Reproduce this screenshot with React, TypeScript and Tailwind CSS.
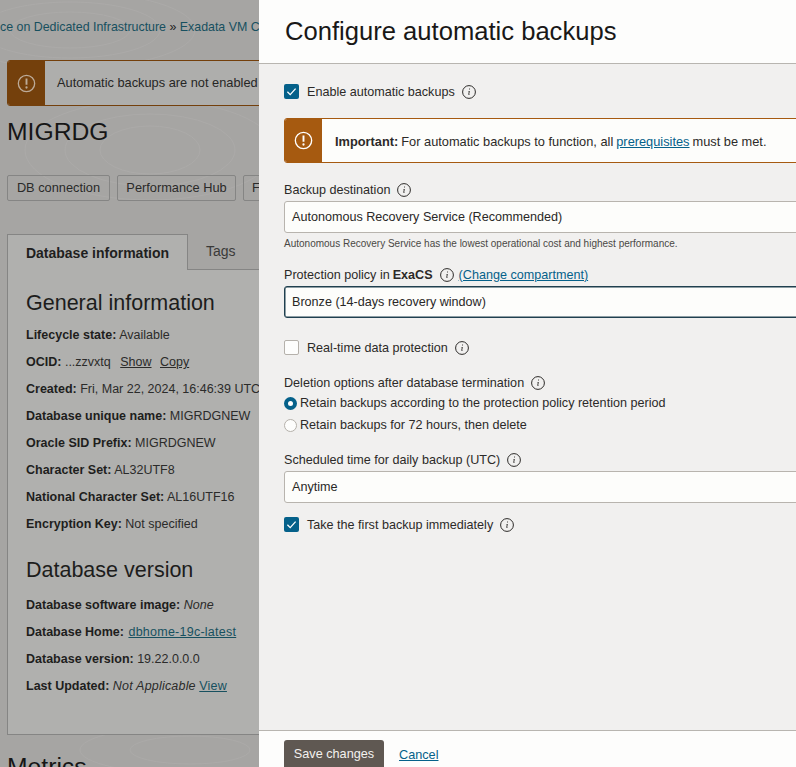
const InfoIcon = ({ className = '' }: { className?: string }) => (
  <svg viewBox="0 0 14 14" className={`h-[14px] w-[14px] shrink-0 ${className}`} fill="none">
    <circle cx="7" cy="7" r="6.4" stroke="#2c2a28" strokeWidth="1" />
    <path d="M7.2 3.6h.9l-.2 1h-.9zM6.9 5.9h.9l-.6 3.4c0 .2.1.3.5.2l-.1.5c-.8.2-1.4 0-1.3-.7l.5-2.9h-.5l.1-.5z" fill="#2c2a28" />
  </svg>
);

const WarnIcon = ({ stroke }: { stroke: string }) => (
  <svg viewBox="0 0 20 20" className="h-[19px] w-[19px]" fill="none">
    <circle cx="10" cy="10" r="8.6" stroke={stroke} strokeWidth="1.4" />
    <path d="M10 4.8v6.6" stroke={stroke} strokeWidth="2" />
    <circle cx="10" cy="14.2" r="1.2" fill={stroke} />
  </svg>
);

const CheckBox = ({ checked }: { checked: boolean }) =>
  checked ? (
    <span className="flex h-[15px] w-[15px] shrink-0 items-center justify-center rounded-[2px] bg-[#05618a]">
      <svg viewBox="0 0 15 15" className="h-[15px] w-[15px]" fill="none">
        <path d="M3.4 7.8l2.8 2.8 5.4-6" stroke="#ffffff" strokeWidth="1.3" />
      </svg>
    </span>
  ) : (
    <span className="h-[15px] w-[15px] shrink-0 rounded-[2px] border border-[#b5b1ab] bg-[#fdfdfc]" />
  );

const Field = ({ value, focused = false }: { value: string; focused?: boolean }) => (
  <div
    className={[
      'flex items-center rounded-l-[3px] border bg-[#fdfdfb] pl-[7px] text-[12.6px] text-[#2a2826] -mr-[10px]',
      focused ? 'h-[32px] border-[#20404f] shadow-[inset_0_0_0_0.5px_#20404f]' : 'h-[32px] border-[#b8b4ae]',
    ].join(' ')}
  >
    {value}
  </div>
);

const DetailRow = ({ label, children }: { label: string; children?: React.ReactNode }) => (
  <div className="h-[27px] whitespace-nowrap text-[12.5px] leading-[27px] text-[#2b2b2a]">
    <b className="font-bold text-[#1e1e1d]">{label}</b> {children}
  </div>
);

const BackgroundPage = () => (
  <div className="relative h-full w-[259px] shrink-0 overflow-hidden bg-[#a6a5a3]">
    <svg className="absolute inset-0 h-full w-full" viewBox="0 0 259 767" fill="none" stroke="#adacaa" strokeWidth="0.7">
      <ellipse cx="70" cy="30" rx="60" ry="18" />
      <ellipse cx="70" cy="30" rx="90" ry="28" />
      <ellipse cx="70" cy="30" rx="125" ry="38" />
      <ellipse cx="150" cy="150" rx="50" ry="24" />
      <ellipse cx="150" cy="150" rx="85" ry="36" />
      <ellipse cx="150" cy="150" rx="125" ry="50" />
      <ellipse cx="190" cy="750" rx="60" ry="14" />
      <ellipse cx="190" cy="750" rx="110" ry="24" />
    </svg>
    <div className="relative w-[700px] pl-[7px]">
      <div className="-ml-[7px] pt-[19px] text-[12.4px] leading-[16px] text-[#17505f]">
        ce on Dedicated Infrastructure <span className="text-[#222]">»</span> Exadata VM Clusters
      </div>
      <div className="mt-[25px] flex h-[46px] overflow-hidden rounded-[3px] border border-[#74400c] bg-[#aeaeac]">
        <div className="flex w-[37px] items-center justify-center bg-[#74400c]">
          <WarnIcon stroke="#bcaa98" />
        </div>
        <div className="flex items-center pl-[12px] text-[12.8px] text-[#262625]">Automatic backups are not enabled for this database.</div>
      </div>
      <div className="mt-[11px] text-[24.7px] leading-[30px] text-[#161616]">MIGRDG</div>
      <div className="mt-[28px] flex gap-[7px] text-[12.8px] text-[#2a2a29]">
        <div className="flex h-[26px] w-[103px] items-center justify-center rounded-[2px] border border-[#858584]">DB connection</div>
        <div className="flex h-[26px] w-[119px] items-center justify-center rounded-[2px] border border-[#858584]">Performance Hub</div>
        <div className="flex h-[26px] w-[100px] items-center rounded-[2px] border border-[#858584] pl-[8px]">Flashback</div>
      </div>
      <div className="mt-[32px] flex h-[36px] items-end">
        <div className="-mb-px flex h-[36px] w-[181px] items-center justify-center border border-[#858584] border-b-0 bg-[#b0b0ae] pt-[2px] text-[14px] font-bold text-[#1f1f1e]">
          Database information
        </div>
        <div className="flex h-[36px] items-center pl-[18px] text-[14px] text-[#3a3a39]">Tags</div>
      </div>
      <div className="h-[466px] w-[640px] border border-[#858584] bg-[#b0b0ae] pl-[18px]">
        <div className="mt-[19px] text-[21.5px] leading-[28px] text-[#1d1d1c]">General information</div>
        <div className="mt-[5px]">
          <DetailRow label="Lifecycle state:">Available</DetailRow>
          <DetailRow label="OCID:">
            ...zzvxtq <span className="ml-[6px] underline">Show</span> <span className="ml-[5px] underline">Copy</span>
          </DetailRow>
          <DetailRow label="Created:">Fri, Mar 22, 2024, 16:46:39 UTC</DetailRow>
          <DetailRow label="Database unique name:">MIGRDGNEW</DetailRow>
          <DetailRow label="Oracle SID Prefix:">MIGRDGNEW</DetailRow>
          <DetailRow label="Character Set:">AL32UTF8</DetailRow>
          <DetailRow label="National Character Set:">AL16UTF16</DetailRow>
          <DetailRow label="Encryption Key:">Not specified</DetailRow>
        </div>
        <div className="mt-[18px] text-[21.5px] leading-[28px] text-[#1d1d1c]">Database version</div>
        <div className="mt-[8px]">
          <DetailRow label="Database software image:">
            <i>None</i>
          </DetailRow>
          <DetailRow label="Database Home:">
            <span className="ml-[1px] tracking-[0.25px] text-[#17505f] underline">dbhome-19c-latest</span>
          </DetailRow>
          <DetailRow label="Database version:">19.22.0.0.0</DetailRow>
          <DetailRow label="Last Updated:">
            <i className="tracking-[0.2px]">Not Applicable</i> <span className="tracking-[0.2px] text-[#17505f] underline">View</span>
          </DetailRow>
        </div>
      </div>
      <div className="mt-[17px] text-[24.7px] leading-[30px] text-[#161616]">Metrics</div>
    </div>
  </div>
);

export default function App() {
  return (
    <div className="flex h-[767px] w-[796px] overflow-hidden font-['Liberation_Sans',Arial,sans-serif]">
      <BackgroundPage />
      <div className="flex h-full w-[537px] flex-col overflow-hidden bg-[#f1f0ef]">
        <div className="flex h-[64px] shrink-0 items-center border-b border-[#b8b5b0] bg-[#fdfdfc] pl-[26px] text-[25.6px] text-[#191817]">
          Configure automatic backups
        </div>
        <div className="flex-1 pl-[25px] text-[12.6px] text-[#2c2a28]">
          <div className="mt-[20px] flex h-[15px] items-center">
            <CheckBox checked />
            <span className="ml-[8px] pt-[2px]">Enable automatic backups</span>
            <InfoIcon className="ml-[7px]" />
          </div>
          <div className="-mr-[10px] mt-[19px] flex h-[45px] overflow-hidden rounded-l-[3px] border border-[#a65a10] bg-[#fdfdfb]">
            <div className="flex w-[37px] items-center justify-center bg-[#a65a10]">
              <WarnIcon stroke="#ffffff" />
            </div>
            <div className="flex items-center pl-[13px] pt-[2px] text-[12.8px]">
              <b className="font-bold">Important:</b>
              <span className="ml-[3px]">For automatic backups to function, all</span>
              <span className="ml-[3px] text-[#05618a] underline">prerequisites</span>
              <span className="ml-[3px]">must be met.</span>
            </div>
          </div>
          <div className="mt-[19px] flex h-[16px] items-center">
            Backup destination <InfoIcon className="ml-[7px]" />
          </div>
          <div className="mt-[3px]">
            <Field value="Autonomous Recovery Service (Recommended)" />
          </div>
          <div className="mt-[5px] text-[10px] leading-[12px] text-[#4a4845]">
            Autonomous Recovery Service has the lowest operational cost and highest performance.
          </div>
          <div className="mt-[17px] flex h-[16px] items-center">
            Protection policy in <b className="ml-[3px] font-bold">ExaCS</b>
            <InfoIcon className="ml-[7px]" />
            <span className="ml-[5px] text-[#05618a] underline">(Change compartment)</span>
          </div>
          <div className="mt-[3px]">
            <Field value="Bronze (14-days recovery window)" focused />
          </div>
          <div className="mt-[22px] flex h-[15px] items-center">
            <CheckBox checked={false} />
            <span className="ml-[8px] pt-[2px]">Real-time data protection</span>
            <InfoIcon className="ml-[7px]" />
          </div>
          <div className="mt-[20px] flex h-[16px] items-center">
            Deletion options after database termination <InfoIcon className="ml-[7px]" />
          </div>
          <div className="mt-[4px] flex h-[16px] items-center">
            <span className="flex h-[13px] w-[13px] items-center justify-center rounded-full bg-[#05618a]">
              <span className="h-[5px] w-[5px] rounded-full bg-white" />
            </span>
            <span className="ml-[3px]">Retain backups according to the protection policy retention period</span>
          </div>
          <div className="mt-[6px] flex h-[16px] items-center">
            <span className="h-[13px] w-[13px] rounded-full border border-[#b5b1ab] bg-[#fdfdfc]" />
            <span className="ml-[3px]">Retain backups for 72 hours, then delete</span>
          </div>
          <div className="mt-[19px] flex h-[16px] items-center">
            Scheduled time for daily backup (UTC) <InfoIcon className="ml-[7px]" />
          </div>
          <div className="mt-[3px]">
            <Field value="Anytime" />
          </div>
          <div className="mt-[14px] flex h-[15px] items-center">
            <CheckBox checked />
            <span className="ml-[8px] pt-[2px]">Take the first backup immediately</span>
            <InfoIcon className="ml-[7px]" />
          </div>
        </div>
        <div className="flex h-[37px] shrink-0 items-start border-t border-[#b8b5b0] bg-[#fdfdfc] pl-[25px] pt-[9px] text-[12.7px]">
          <div className="flex h-[32px] w-[100px] shrink-0 items-center justify-center rounded-[3px] bg-[#5f5852] pb-[3px] text-[#f3f1ef]">Save changes</div>
          <span className="ml-[15px] mt-[6px] text-[#05618a] underline">Cancel</span>
        </div>
      </div>
    </div>
  );
}
